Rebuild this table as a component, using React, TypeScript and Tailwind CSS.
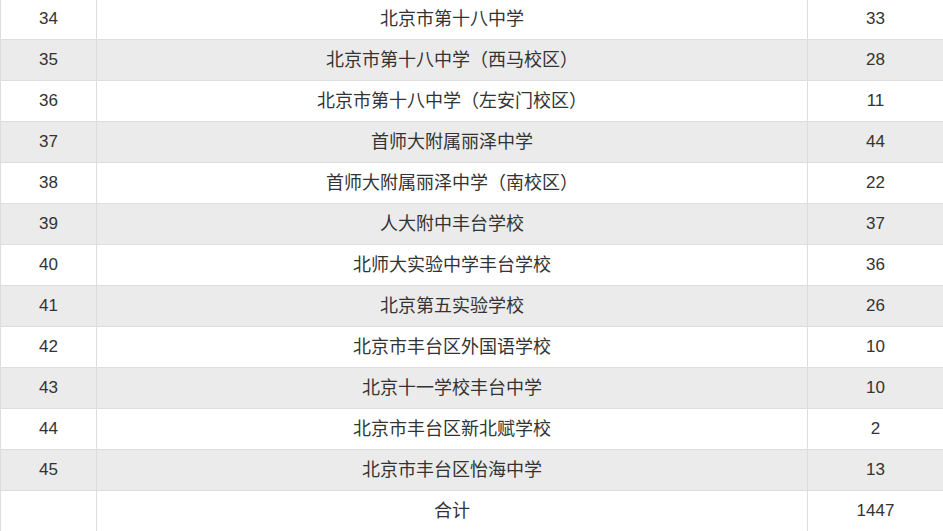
import React from 'react';

const ROWS: [string, string, string][] = [
  ['34', '北京市第十八中学', '33'],
  ['35', '北京市第十八中学（西马校区）', '28'],
  ['36', '北京市第十八中学（左安门校区）', '11'],
  ['37', '首师大附属丽泽中学', '44'],
  ['38', '首师大附属丽泽中学（南校区）', '22'],
  ['39', '人大附中丰台学校', '37'],
  ['40', '北师大实验中学丰台学校', '36'],
  ['41', '北京第五实验学校', '26'],
  ['42', '北京市丰台区外国语学校', '10'],
  ['43', '北京十一学校丰台中学', '10'],
  ['44', '北京市丰台区新北赋学校', '2'],
  ['45', '北京市丰台区怡海中学', '13'],
  ['', '合计', '1447'],
];

const App = () => {
  return (
    <div className="w-[943px] h-[531px] overflow-hidden bg-white">
      <table
        className="w-[943px] table-fixed border-collapse -mt-[2px] text-[17px] text-[#333333]"
        style={{ fontFamily: '"Liberation Sans", "Noto Sans CJK SC", sans-serif' }}
      >
        <colgroup>
          <col className="w-[96px]" />
          <col className="w-[711px]" />
          <col className="w-[136px]" />
        </colgroup>
        <tbody>
          {ROWS.map((row, i) => (
            <tr key={i} className={i % 2 === 1 ? 'bg-[#ebebeb]' : 'bg-white'}>
              <td className="h-[41px] p-0 text-center align-middle border border-[#dddddd]">{row[0]}</td>
              <td className="h-[41px] p-0 text-center align-middle border border-[#dddddd] text-[18px] leading-[20px]">
                {row[1]}
              </td>
              <td className="h-[41px] p-0 text-center align-middle border border-[#dddddd]">{row[2]}</td>
            </tr>
          ))}
        </tbody>
      </table>
    </div>
  );
};

export default App;
